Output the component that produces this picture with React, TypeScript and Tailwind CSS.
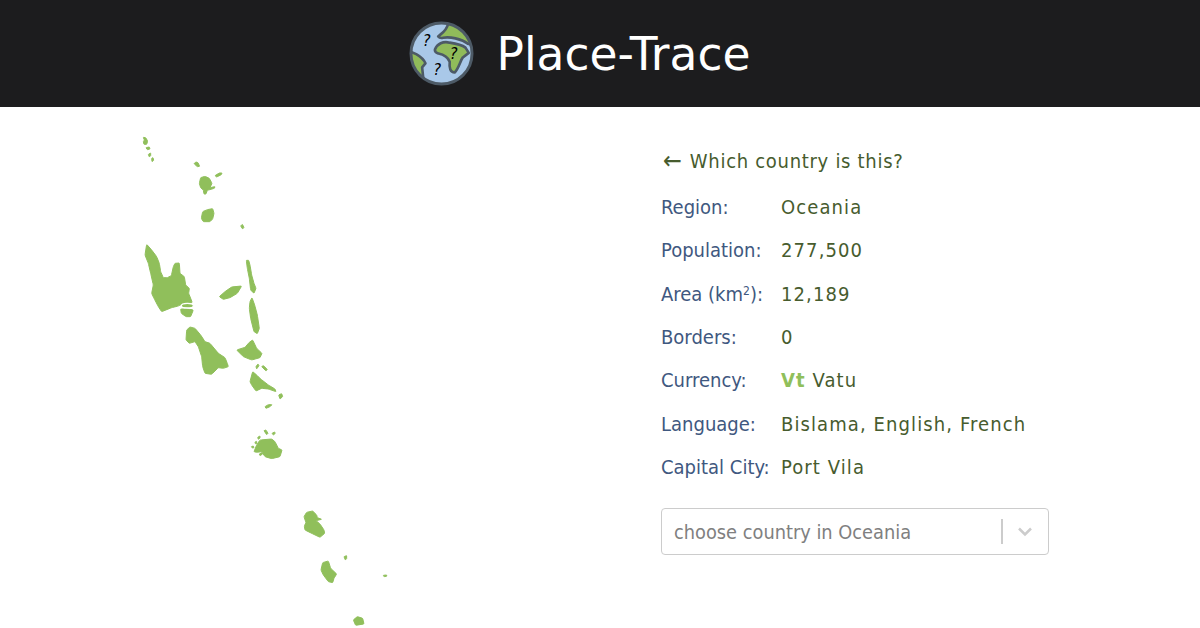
const green = "#90bf5b";

const z2 = [
  "40,37 47,38 53,48 50,58 42,58 40,50 43,45",
  "48,68 58,66 60,72 52,74",
  "55,88 62,84 62,92 58,96",
  "65,100 69,98 71,106 66,110",
  "192,116 198,111 204,113 209,124 202,125",
  "208,175 212,158 225,154 238,160 246,175 240,188 255,185 253,190 232,196 228,207 222,207 220,195 212,188",
  "255,152 268,144 276,144 274,149 260,156",
  "214,280 218,260 232,254 248,251 252,265 248,282 240,290 220,290",
  "332,303 337,298 342,307 338,312",
];
const z3 = [
  "50,28 65,45 80,65 88,85 92,110 100,128 112,128 124,122 130,95 135,85 148,84 150,115 163,125 167,150 178,160 176,175 187,203 165,203 145,213 125,218 95,230 85,215 72,190 65,175 70,150 62,115 55,85 45,60",
  "349,76 356,76 360,90 365,120 372,145 378,160 372,175 362,165 358,130 352,100",
  "360,200 366,188 374,210 382,240 388,280 382,296 372,290 362,250 358,220",
  "268,185 285,170 305,156 335,153 322,175 300,188 280,193",
  "152,222 165,220 190,225 182,245 168,245 154,235",
  "170,285 180,276 195,280 212,300 225,320 240,325 265,355 285,368 292,385 295,395 280,400 265,398 245,418 225,415 218,395 215,365 205,335 195,320 178,325 168,315",
  "320,345 345,337 358,322 368,315 380,340 396,355 390,368 365,375 340,365",
  "378,395 384,387 387,392 380,402",
  "395,395 400,392 412,403 408,408",
  "360,440 368,410 380,420 392,432 415,450 435,462 438,470 415,462 395,460 378,468 365,450",
  "446,480 455,476 458,485 450,492",
];
const z4 = [
  "75,20 85,14 96,14 90,20 78,25",
  "42,155 50,135 60,120 95,117 105,125 115,145 126,150 120,170 95,176 75,170 65,155 50,157",
  "72,92 78,90 84,100 80,104",
  "96,100 104,96 106,100 100,105",
  "53,112 60,108 60,114 55,118",
  "45,126 50,124 50,131 46,131",
  "34,140 40,138 42,143 37,144",
  "58,162 66,158 68,162 60,167",
  "192,350 200,337 218,333 230,345 232,353 245,358 228,362 240,372 252,390 254,400 240,412 215,400 195,390 193,378 198,368",
  "243,510 248,488 265,483 272,505 290,522 282,535 278,548 265,545 250,525",
  "312,470 320,467 320,476 316,480",
  "430,526 440,525 440,529 432,530",
  "340,660 352,650 368,655 372,672 347,676",
];

function rounded(points: string) {
  const pts = points.split(" ").map((p) => p.split(",").map(Number));
  const t = 0.12;
  const lerp = (a: number[], b: number[]) => [a[0] + (b[0] - a[0]) * t, a[1] + (b[1] - a[1]) * t];
  let d = "";
  pts.forEach((p, i) => {
    const a = lerp(p, pts[(i - 1 + pts.length) % pts.length]);
    const b = lerp(p, pts[(i + 1) % pts.length]);
    d += `${i === 0 ? "M" : "L"}${a[0]} ${a[1]} Q${p[0]} ${p[1]} ${b[0]} ${b[1]} `;
  });
  return d + "Z";
}

function Shapes({ list }: { list: string[] }) {
  return (
    <>
      {list.map((p) => (
        <path key={p} d={rounded(p)} fill={green} stroke={green} strokeWidth={3} strokeLinejoin="round" />
      ))}
    </>
  );
}

function VanuatuMap() {
  return (
    <svg width={640} height={521} viewBox="0 107 640 521" className="block">
      <g transform="translate(130,125) scale(0.3333)">
        <Shapes list={z2} />
      </g>
      <g transform="translate(130,235) scale(0.3333)">
        <Shapes list={z3} />
        <ellipse cx={172} cy={212} rx={18} ry={7} fill={green} stroke="#ffffff" strokeWidth={3.5} />
        <path d="M148 218 L194 220" stroke="#ffffff" strokeWidth={4} />
      </g>
      <g transform="translate(240,400) scale(0.3333)">
        <Shapes list={z4} />
      </g>
    </svg>
  );
}

function Logo() {
  return (
    <svg width={65} height={65} viewBox="26 31 198 198" className="block shrink-0">
      <defs>
        <clipPath id="globe">
          <circle cx={125} cy={130} r={93} />
        </clipPath>
      </defs>
      <circle cx={125} cy={130} r={93} fill="#a9c8e8" />
      <g clipPath="url(#globe)" fill="#90bb5a" stroke="#4d5a66" strokeWidth={8} strokeLinejoin="round">
        <path d="M115 78 C125 68 140 62 145 40 L200 40 L235 85 L212 102 L205 100 C185 85 150 78 130 82 C122 84 118 82 115 78Z" />
        <path d="M105 118 C112 100 130 92 150 97 C170 100 190 106 198 112 L208 128 L190 142 C182 152 178 175 165 188 C152 188 148 175 150 155 C142 135 125 132 115 130 C108 128 104 124 105 118Z" />
        <path d="M25 122 L48 132 C62 140 72 150 76 160 L66 172 L70 210 L25 190Z" />
      </g>
      <circle cx={125} cy={130} r={93} fill="none" stroke="#4d5a66" strokeWidth={9} />
      <g fill="#000000" fontFamily="'DejaVu Sans', sans-serif" fontSize={50} fontStyle="italic" textAnchor="middle">
        <text x={80} y={106}>?</text>
        <text x={162} y={148}>?</text>
        <text x={112} y={195}>?</text>
      </g>
    </svg>
  );
}

const rows: [string, React.ReactNode][] = [
  ["Region:", "Oceania"],
  ["Population:", "277,500"],
  ["Area", "12,189"],
  ["Borders:", "0"],
  [
    "Currency:",
    <>
      <span className="font-bold text-[#90bf5b]">Vt</span> Vatu
    </>,
  ],
  ["Language:", "Bislama, English, French"],
  ["Capital City:", "Port Vila"],
];

export default function App() {
  return (
    <div className="h-[628px] w-[1200px] overflow-hidden bg-white font-['DejaVu_Sans_Condensed','DejaVu_Sans',sans-serif] [font-stretch:condensed]">
      <header className="flex h-[107px] items-center justify-center gap-[23px] bg-[#1c1c1e] pr-[41px]">
        <Logo />
        <span className="pt-[2px] font-['DejaVu_Sans',sans-serif] text-[45.5px] leading-none text-white [font-stretch:normal]">Place-Trace</span>
      </header>
      <main className="flex">
        <div className="w-[661px] shrink-0">
          <VanuatuMap />
        </div>
        <div className="flex w-[388px] flex-col pt-[41px]">
          <div className="mb-[11.5px] flex items-center pl-[2px] text-[20px] leading-[26px] tracking-[0.7px] text-[#475c2e]">
            <span className="mr-[8px] text-[25px] leading-[26px] tracking-normal">←</span>
            <span>Which country is this?</span>
          </div>
          {rows.map(([label, value]) => (
            <div key={label} className="flex h-[43.33px] items-center text-[20px]">
              <span className="w-[120px] shrink-0 whitespace-nowrap text-[#3f5880]">
                {label === "Area" ? (
                  <>
                    Area (km<sup className="text-[12px]">2</sup>):
                  </>
                ) : (
                  label
                )}
              </span>
              <span className="whitespace-nowrap tracking-[1.1px] text-[#475c2e]">{value}</span>
            </div>
          ))}
          <div className="mt-[19px] flex h-[47px] items-center rounded-[4px] border border-[#cccccc] pl-[12px]">
            <span className="flex-1 pt-[4px] text-[19.8px] text-[#808080]">choose country in Oceania</span>
            <span className="ml-[12px] h-[25px] w-[2px] bg-[#cccccc]" />
            <svg width={20} height={20} viewBox="0 0 20 20" className="ml-[12px] mr-[13px]">
              <path d="M4 7.5 L10 13.5 L16 7.5" fill="none" stroke="#cccccc" strokeWidth={2.5} />
            </svg>
          </div>
        </div>
      </main>
    </div>
  );
}
